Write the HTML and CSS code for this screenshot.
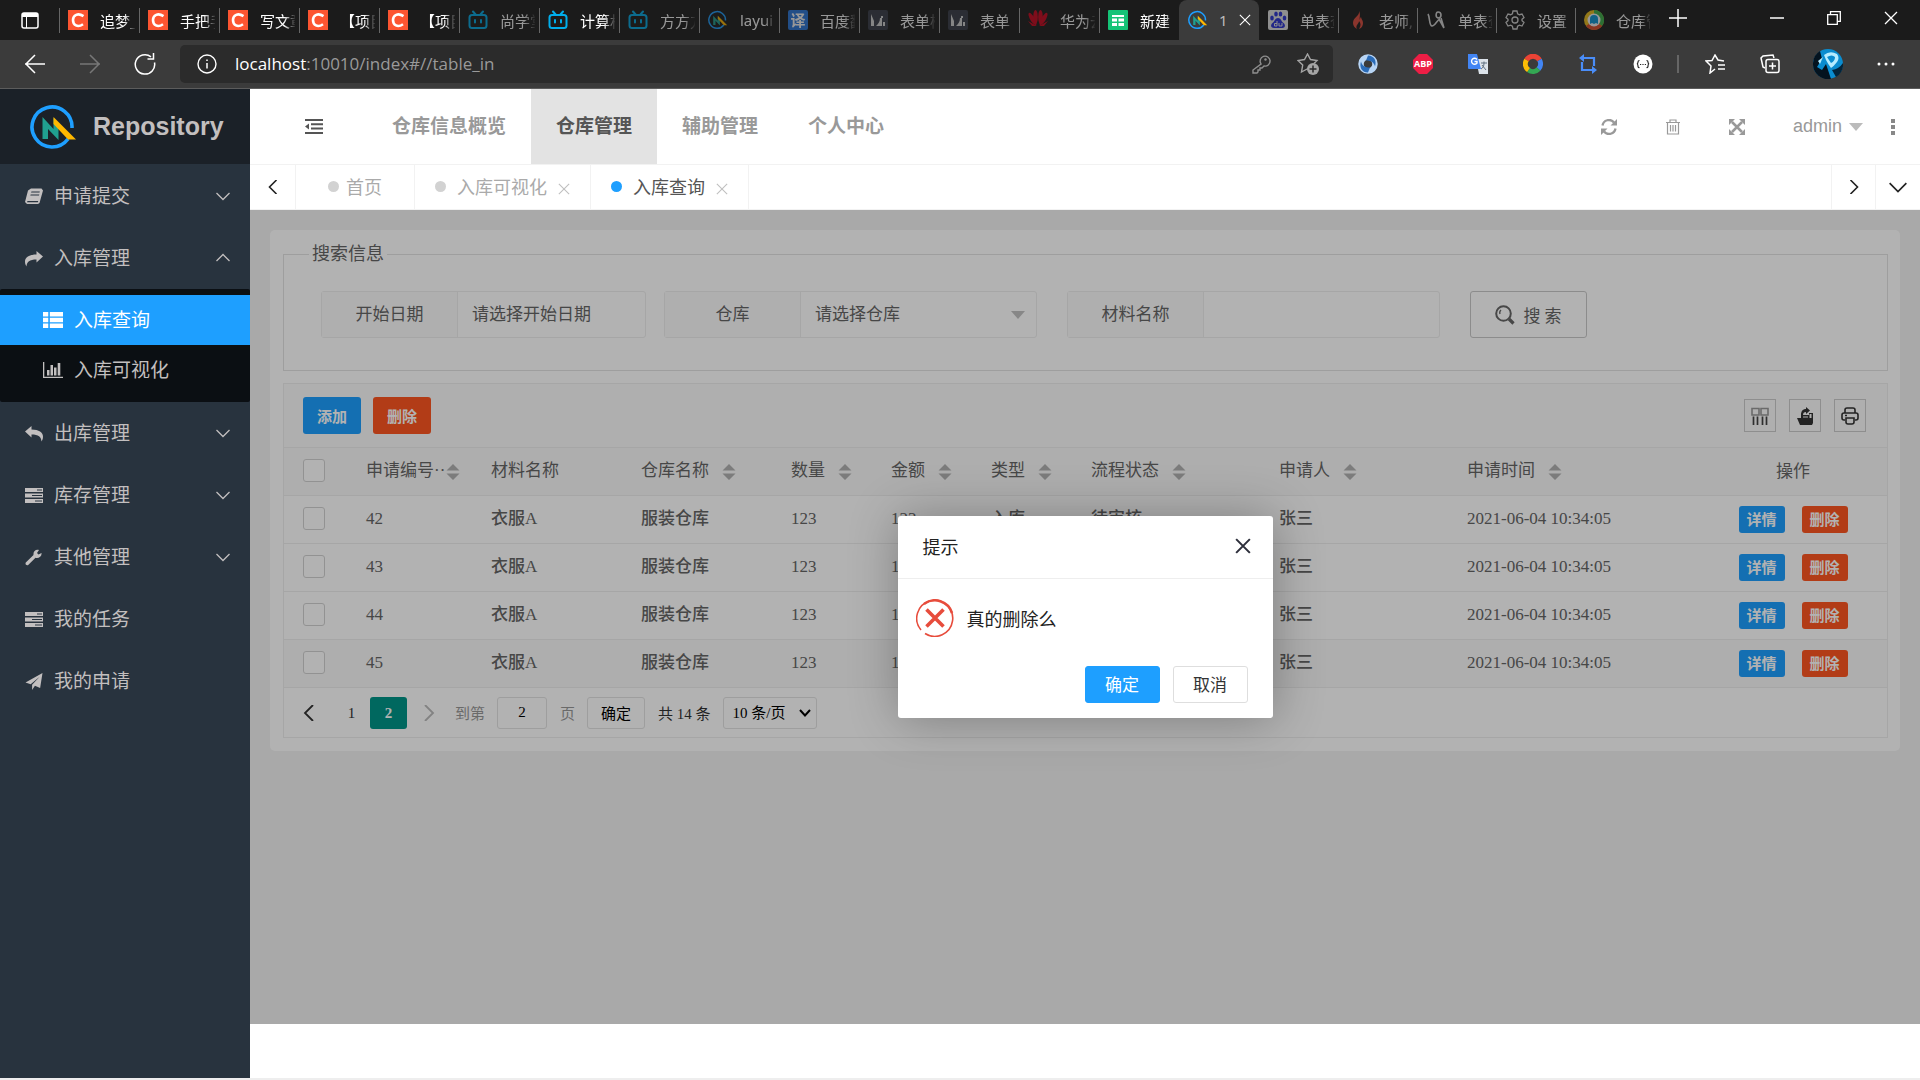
FILE: index.html
```html
<!DOCTYPE html>
<html lang="zh-CN">
<head>
    <meta charset="UTF-8">
    <meta name="viewport" content="width=device-width, initial-scale=1.0">
    <title>Repository</title>
    <link rel="stylesheet" href="styles.css">
</head>
<body>
    <!-- Shared icons -->
    <svg width="0" height="0" class="sprite" aria-hidden="true">
        <symbol id="i-c" viewBox="0 0 20 20"><path fill="#fc5531" d="M0 0h20v20H0z"/><path d="M15.500 6.200C10 2.500 5 5 5 10s4.500 8 10 4.200" fill="none" stroke="#fff" stroke-width="2.600"/></symbol>
        <symbol id="i-bili" viewBox="0 0 20 20"><g fill="none" stroke="#00aeec" stroke-width="2" stroke-linecap="round"><rect x="1.500" y="5" width="17" height="13" rx="2.500"/><path d="M5 1.500 8 5M15 1.500 12 5M7 10v2.500M13 10v2.500"/></g></symbol>
        <symbol id="i-logo" viewBox="0 0 48 46"><path d="M38 35A20 20 0 1 1 42 24" fill="none" stroke="#1e9fff" stroke-width="3.600"/><path fill="#20a090" d="m12.500 13 11 12V14l5 5v17L18 25v10h-5.500z"/><path fill="#ffb800" d="m23.500 13 22.500 22.500h-8L23.500 20z"/></symbol>
        <symbol id="i-ship" viewBox="0 0 20 20"><rect width="20" height="20" rx="2" fill="#393d49"/><path fill="#ddd" d="M3 16V4l3 7v5zM8 16c2-2 4-4 4-8h2v8zM15 12h2v4h-2zM13 6h2v2h-2z"/></symbol>
        <symbol id="i-down" viewBox="0 0 14 14"><path d="m.5 4 6.500 6.500L13.500 4" fill="none" stroke="currentColor" stroke-width="1.300"/></symbol>
        <symbol id="i-left" viewBox="0 0 14 14"><path d="M10.500 0 3.500 7l7 7" fill="none" stroke="currentColor" stroke-width="1.600"/></symbol>
        <symbol id="i-x" viewBox="0 0 14 14"><path d="m1 1 12 12M13 1 1 13" fill="none" stroke="currentColor" stroke-width="1.300"/></symbol>
        <symbol id="i-share" viewBox="0 0 18 16"><path fill="currentColor" d="M18 6 11.500.500V4C4 4 0 7 0 11c0 2 .5 3.500 1.500 5 .2-4.500 3-7 10-7v3z"/></symbol>
        <symbol id="i-server" viewBox="0 0 18 15"><path fill="currentColor" fill-rule="evenodd" d="M0 0h18v4H0zM0 5.500h18v4H0zM0 11h18v4H0zM12 1.500v1h5v-1zM7 7v1h10V7zM10 12.500v1h7v-1z"/></symbol>
        <symbol id="i-sort" viewBox="0 0 14 16"><path fill="#b2b2b2" d="m7 0 6.500 6.500H.5zM7 16 .5 9.500h13z"/></symbol>
        <symbol id="i-caret" viewBox="0 0 14 8"><path fill="currentColor" d="M0 0h14L7 8z"/></symbol>
    </svg>

    <!-- Browser tabs -->
    <div class="tabstrip">
        <div class="tab-actions">
            <svg width="20" height="20" viewBox="0 0 20 20"><rect x="2" y="3" width="16" height="15" rx="2" fill="none" stroke="#fff" stroke-width="1.500"/><path fill="#fff" d="M2 3h16v4H2z"/><path d="M6.500 7v11" stroke="#fff"/></svg>
        </div>
        <div class="tabs">
            <div class="tab"><svg><use href="#i-c"/></svg><span>追梦_</span></div>
            <div class="tab"><svg><use href="#i-c"/></svg><span>手把手</span></div>
            <div class="tab"><svg><use href="#i-c"/></svg><span>写文章</span></div>
            <div class="tab"><svg><use href="#i-c"/></svg><span>【项目</span></div>
            <div class="tab"><svg><use href="#i-c"/></svg><span>【项目</span></div>
            <div class="tab dim"><svg><use href="#i-bili"/></svg><span>尚学堂</span></div>
            <div class="tab"><svg><use href="#i-bili"/></svg><span>计算机</span></div>
            <div class="tab dim"><svg><use href="#i-bili"/></svg><span>方方方</span></div>
            <div class="tab dim"><svg><use href="#i-logo"/></svg><span>layui</span></div>
            <div class="tab dim"><b class="fanyi">译</b><span>百度翻</span></div>
            <div class="tab dim"><svg><use href="#i-ship"/></svg><span>表单模</span></div>
            <div class="tab dim"><svg><use href="#i-ship"/></svg><span>表单</span></div>
            <div class="tab dim"><svg viewBox="0 0 20 20"><g fill="#d0021b"><ellipse cx="7.500" cy="7" rx="2.300" ry="7"/><ellipse cx="12.500" cy="7" rx="2.300" ry="7"/><ellipse cx="4.500" cy="9" rx="2.300" ry="7" transform="rotate(-30 4.500 9)"/><ellipse cx="15.500" cy="9" rx="2.300" ry="7" transform="rotate(30 15.500 9)"/><path d="m0 11 9 5H4zM20 11l-9 5h5z"/></g></svg><span>华为云</span></div>
            <div class="tab"><svg viewBox="0 0 20 20"><rect width="20" height="20" rx="1" fill="#15c377"/><path d="M4 5h12v2H4zM4 8.500h5v3H4zM10.500 8.500H16v3h-5.500zM4 13h5v3H4zM10.500 13H16v3h-5.500z" fill="#fff"/></svg><span>新建</span></div>
            <div class="tab current"><svg><use href="#i-logo"/></svg><span>1</span><svg class="tab-close"><use href="#i-x"/></svg></div>
            <div class="tab dim first"><svg viewBox="0 0 20 20"><rect width="20" height="20" rx="2" fill="#eee"/><g fill="#2932e1"><ellipse cx="4" cy="8" rx="1.800" ry="2.500"/><ellipse cx="8" cy="4" rx="1.800" ry="2.500"/><ellipse cx="12.500" cy="4" rx="1.800" ry="2.500"/><ellipse cx="16.500" cy="8" rx="1.800" ry="2.500"/><path d="M10 8c3 0 3 3 5.500 5s1.500 5-1 5H6c-3 0-4-3-1.500-5S7 8 10 8z"/></g><path d="M9 11v5H6.500v-2.500H9M11 13v3h3v-3" fill="none" stroke="#eee"/></svg><span>单表查</span></div>
            <div class="tab dim"><svg viewBox="0 0 20 20"><path fill="#e74c3c" d="M12 1c1 5-6 6-6 12 0 3 2 5 4 6-2-4 2-5 2-8 2 2 2 5 0 8 3-1 4-4 4-6 0-3-2-4-2-6-1 1-1 2-1 3-1-3 1-5-1-9z"/></svg><span>老师,</span></div>
            <div class="tab dim"><svg viewBox="0 0 20 20"><path d="M2 4c2 3 1 12 4 12s5-6 8-7M12 2a3 3 0 1 1 0 6c-3-1-2-6 0-6zM13 9l5 9M15 8l3 10" fill="none" stroke="#ddd" stroke-width="1.600"/></svg><span>单表查</span></div>
            <div class="tab dim"><svg viewBox="0 0 20 20"><path d="M8 1h4l.6 2.700 1.800 1L17 4l2 3.500-2 1.800v1.400l2 1.800L17 16l-2.600-.8-1.800 1L12 19H8l-.6-2.800-1.800-1L3 16l-2-3.500 2-1.800V9.300L1 7.500 3 4l2.600.7 1.800-1z" fill="none" stroke="#ddd" stroke-width="1.300"/><circle cx="10" cy="10" r="3" fill="none" stroke="#ddd" stroke-width="1.300"/></svg><span>设置</span></div>
            <div class="tab dim"><svg viewBox="0 0 20 20"><circle cx="10" cy="10" r="10" fill="#f5c518"/><path d="M10 0a10 10 0 0 1 8 16L10 10z" fill="#3cb54a"/><path d="M18 16A10 10 0 0 1 2 16l8-6z" fill="#e34c26"/><circle cx="10" cy="10" r="6.500" fill="#fff"/><path d="M6 14V9a4 4 0 0 1 8 0v5l-2-1-2 1-2-1z" fill="#0a9bdc"/></svg><span>仓库管</span></div>
        </div>
        <div class="window-buttons">
            <svg class="plus" width="18" height="18" viewBox="0 0 18 18"><path d="M9 0v18M0 9h18" stroke="#fff" stroke-width="1.500"/></svg>
            <svg width="14" height="14" viewBox="0 0 14 14"><path d="M0 7h14" stroke="#fff" stroke-width="1.500"/></svg>
            <svg width="14" height="14" viewBox="0 0 14 14"><path d="M.7 3.700h9.600v9.600H.7zM3.500 3.500V.7h9.800v9.600h-2.800" fill="none" stroke="#fff" stroke-width="1.300"/></svg>
            <svg width="14" height="14"><use href="#i-x"/></svg>
        </div>
    </div>

    <!-- Browser toolbar -->
    <div class="toolbar">
        <div class="nav-icons">
            <svg width="22" height="22" viewBox="0 0 22 22"><path d="M21 11H1M11 2l-9 9 9 9" fill="none" stroke="#fff" stroke-width="1.500"/></svg>
            <svg width="22" height="22" viewBox="0 0 22 22"><path d="M1 11h20M11 2l9 9-9 9" fill="none" stroke="#777" stroke-width="1.500"/></svg>
            <svg width="22" height="22" viewBox="0 0 22 22"><path d="M20.500 9.500A9.700 9.700 0 1 1 17 3.800M19.500 0v6h-6" fill="none" stroke="#fff" stroke-width="1.500"/></svg>
        </div>
        <div class="address">
            <svg width="20" height="20" viewBox="0 0 20 20"><circle cx="10" cy="10" r="9" fill="none" stroke="#fff" stroke-width="1.400"/><path d="M10 9v5.500M10 5.500v1.600" stroke="#fff" stroke-width="1.500"/></svg>
            <span class="url"><b>localhost</b>:10010/index#//table_in</span>
            <svg width="20" height="20" viewBox="0 0 20 20"><path d="M10 10a5 5 0 1 1 3 2l-2 2H9v2H7v2l-1 1H2v-3z" fill="none" stroke="#8f8f8f" stroke-width="1.400"/><circle cx="14.500" cy="5.500" r="1.200" fill="#8f8f8f"/></svg>
            <svg width="22" height="22" viewBox="0 0 22 22"><path d="M11 15.500 4.500 19l1.200-7L1 7.500l6.500-1L10.500 1l3 5.500 6.500 1-3 3" fill="none" stroke="#a5a5a5" stroke-width="1.400"/><circle cx="16" cy="16" r="6" fill="#a5a5a5"/><path d="M16 12.500v7M12.500 16h7" stroke="#2b2b2b" stroke-width="1.500"/></svg>
        </div>
        <div class="extensions">
            <svg viewBox="0 0 20 20"><circle cx="10" cy="10" r="7" fill="none" stroke="#b8d5f5" stroke-width="5.500"/><path d="M10 1.500c6 0 9 5 7 11-1-4-4-6-9-6zM10 18.500c-6 0-9-5-7-11 1 4 4 6 9 6z" fill="#2b6cb8"/></svg>
            <span class="abp">ABP</span>
            <svg viewBox="0 0 20 20"><path fill="#dce3ea" d="M8 5h12v15H11z"/><path fill="#4285f4" d="M0 0h9l4 15H1a1 1 0 0 1-1-1z"/><path d="M9 5.500A3 3 0 1 0 9 9V7.500H6.500" fill="none" stroke="#fff" stroke-width="1.400"/><path d="M13 9h6M16 7.500V9c0 3-1 5-3 6M14 11l4 5" fill="none" stroke="#607080"/></svg>
            <svg viewBox="0 0 20 20" fill="none" stroke-width="5"><path d="M3.500 6a7.500 7.500 0 0 1 13 0" stroke="#ea4335"/><path d="M16.500 6a7.500 7.500 0 0 1-1 9" stroke="#4285f4"/><path d="M15.500 15a7.500 7.500 0 0 1-10 1" stroke="#34a853"/><path d="M5.500 16a7.500 7.500 0 0 1-2-10" stroke="#fbbc05"/></svg>
            <svg viewBox="0 0 20 20"><path d="M4 4h12v8M16 16H4V8" fill="none" stroke="#4a8df8" stroke-width="2.200"/><path fill="#4a8df8" d="M6 0v8L1 4zM14 12v8l5-4z"/></svg>
            <svg viewBox="0 0 20 20"><circle cx="10" cy="10" r="9.500" fill="#fff"/><path d="M6.500 6.500q-1.500 0-1.500 1.500T4 10q1 0 1 2t1.500 1.500M13.500 6.500q1.500 0 1.500 1.500t1 2q-1 0-1 2t-1.500 1.500M7 10.500h1.200M9.400 10.500h1.200M11.800 10.500H13" fill="none" stroke="#222" stroke-width="1.200"/></svg>
        </div>
        <div class="browser-menu">
            <svg width="20" height="20" viewBox="0 0 20 20"><path d="m10 15-5 4 1-7-5-5 6-.5L10 1l3 5 6 1M13 11h7M13 15h7" fill="none" stroke="#fff" stroke-width="1.500"/></svg>
            <svg width="20" height="20" viewBox="0 0 20 20"><path d="M5 14 3 13 1 4l2-2 10-1 1 3" fill="none" stroke="#fff" stroke-width="1.500"/><rect x="6" y="5.500" width="13" height="13" rx="2" fill="none" stroke="#fff" stroke-width="1.500"/><path d="M12.500 8.500v7M9 12h7" stroke="#fff" stroke-width="1.500"/></svg>
            <svg width="30" height="30" viewBox="0 0 30 30"><circle cx="15" cy="15" r="15" fill="#0a8ccf"/><path fill="#04131f" d="M0 15A15 15 0 0 1 7 2l2 8-5 8 5 3 4-6 3 9 2 6A15 15 0 0 1 0 15z"/><path fill="#b5ecff" d="M11 6q6-5 13-1 3 4 0 8-3 4-6 6-3-4-5-8zM5 12l5-4-3 7z"/><path fill="#0a8ccf" d="M14 8q5-3 8 0 0 4-4 6z"/><path fill="#03243a" d="M19 21q7-1 11-7a15 15 0 0 1-7 14z"/></svg>
            <svg width="20" height="20" viewBox="0 0 20 20" fill="#fff"><circle cx="3" cy="10" r="1.500"/><circle cx="10" cy="10" r="1.500"/><circle cx="17" cy="10" r="1.500"/></svg>
        </div>
    </div>

    <div class="app">
        <!-- Side menu -->
        <aside class="side">
            <div class="logo">
                <svg width="48" height="46"><use href="#i-logo"/></svg>
                <span>Repository</span>
            </div>
            <nav class="menu">
                <a href="#" class="menu-item"><svg viewBox="0 0 18 16"><path fill="currentColor" fill-rule="evenodd" d="M6 0h10.500L18 2l-3.500 12.500-1.500 1H2L0 13.500 3 2zM6.500 3 6 4h8.500l.3-1zM5.700 6l-.4 1H14l.3-1zM2.500 12.500l-.5 1.200h10.800l.5-1.200z"/></svg><span>申请提交</span><svg class="arrow"><use href="#i-down"/></svg></a>
                <a href="#" class="menu-item"><svg><use href="#i-share"/></svg><span>入库管理</span><svg class="arrow up"><use href="#i-down"/></svg></a>
                <div class="submenu">
                    <a href="#" class="active"><svg viewBox="0 0 19 15"><path fill="currentColor" d="M0 0h5v4.200H0zM6.500 0H19v4.200H6.500zM0 5.400h5v4.200H0zM6.500 5.400H19v4.200H6.500zM0 10.800h5V15H0zM6.500 10.800H19V15H6.500z"/></svg><span>入库查询</span></a>
                    <a href="#"><svg viewBox="0 0 20 16"><path fill="currentColor" d="M0 0h1.300v14.700H20V16H0zM4 8h2.500v5.500H4zM7.500 3H10v10.500H7.500zM11 5.500h2.500v8H11zM14.700 1h2.600v12.500h-2.600z"/></svg><span>入库可视化</span></a>
                </div>
                <a href="#" class="menu-item"><svg class="mirror"><use href="#i-share"/></svg><span>出库管理</span><svg class="arrow"><use href="#i-down"/></svg></a>
                <a href="#" class="menu-item"><svg><use href="#i-server"/></svg><span>库存管理</span><svg class="arrow"><use href="#i-down"/></svg></a>
                <a href="#" class="menu-item"><svg viewBox="0 0 18 16"><path fill="currentColor" d="M16.500 3.500 13.500 5 12 3.500l2-3C11-.5 8 1.500 8.500 5.500L.8 13c-1 1.500.7 3.500 2.400 2.400l7.300-7.200c3 .8 6.500-1 6-4.700z"/></svg><span>其他管理</span><svg class="arrow"><use href="#i-down"/></svg></a>
                <a href="#" class="menu-item"><svg><use href="#i-server"/></svg><span>我的任务</span></a>
                <a href="#" class="menu-item"><svg viewBox="0 0 18 18"><path fill="currentColor" d="M18 0 15.500 16l-5.500-2.500L7 18v-5.500L15 4l-9.500 8L0 10z"/></svg><span>我的申请</span></a>
            </nav>
        </aside>

        <main class="main">
            <header class="header">
                <a href="#" class="fold" aria-label="menu"><svg width="18" height="15" viewBox="0 0 18 15"><path fill="#555" d="M0 0h18v2H0zM6 4.300h12v2H6zM6 8.600h12v2H6zM0 13h18v2H0zM4 4.500v6L0 7.500z"/></svg></a>
                <nav class="top-nav">
                    <a href="#">仓库信息概览</a>
                    <a href="#" class="active">仓库管理</a>
                    <a href="#">辅助管理</a>
                    <a href="#">个人中心</a>
                </nav>
                <div class="header-tools">
                    <svg width="16" height="16" viewBox="0 0 16 16"><path d="M1.500 6.500a6.500 6.500 0 0 1 11.500-3M14.500 9.500a6.500 6.500 0 0 1-11.500 3" fill="none" stroke="#999" stroke-width="2.300"/><path fill="#999" d="M16 0v6.500H9.500zM0 16V9.500h6.500z"/></svg>
                    <svg width="16" height="16" viewBox="0 0 16 16"><path d="M1 3.500h14M5 3V1h6v2M2.500 4v11h11V4M5.500 6v6.500M8 6v6.500M10.500 6v6.500" fill="none" stroke="#999" stroke-width="1.200"/></svg>
                    <svg width="16" height="16" viewBox="0 0 16 16"><path d="m3 3 10 10M13 3 3 13" stroke="#999" stroke-width="2.500"/><path fill="#999" d="M0 0h6L0 6zM16 0v6l-6-6zM0 16v-6l6 6zM16 16h-6l6-6z"/></svg>
                    <a href="#" class="user">admin <svg width="14" height="8"><use href="#i-caret"/></svg></a>
                    <svg class="more" width="4" height="16" viewBox="0 0 4 16" fill="#888"><path d="M0 0h4v4H0zM0 6h4v4H0zM0 12h4v4H0z"/></svg>
                </div>
            </header>

            <div class="page-tabs">
                <button class="step" aria-label="prev"><svg width="14" height="14"><use href="#i-left"/></svg></button>
                <a href="#" class="page-tab home"><i class="dot"></i>首页</a>
                <a href="#" class="page-tab"><i class="dot"></i><span>入库可视化</span><svg><use href="#i-x"/></svg></a>
                <a href="#" class="page-tab active"><i class="dot"></i><span>入库查询</span><svg><use href="#i-x"/></svg></a>
                <button class="step next" aria-label="next"><svg class="mirror" width="14" height="14"><use href="#i-left"/></svg></button>
                <button class="step last" aria-label="tabs"><svg width="18" height="18"><use href="#i-down"/></svg></button>
            </div>

            <section class="frame">
                <div class="card">
                    <fieldset class="search">
                        <legend>搜索信息</legend>
                        <form class="search-row">
                            <div class="group date"><label for="start">开始日期</label><input type="text" id="start" placeholder="请选择开始日期"></div>
                            <div class="group"><label for="store">仓库</label><div class="picker"><select id="store"><option>请选择仓库</option></select><svg width="14" height="8"><use href="#i-caret"/></svg></div></div>
                            <div class="group name"><label for="material">材料名称</label><input type="text" id="material"></div>
                            <button type="button" class="search-btn"><svg width="20" height="20" viewBox="0 0 20 20"><circle cx="8.500" cy="8.500" r="7.300" fill="none" stroke="#666" stroke-width="2"/><path d="M5 9a3.500 3.500 0 0 1 1-4" fill="none" stroke="#666" stroke-width="1.300"/><path d="m14 14 4.500 4.500" stroke="#666" stroke-width="3.200"/></svg>搜 索</button>
                        </form>
                    </fieldset>

                    <div class="table-box">
                        <div class="table-tools">
                            <button class="btn blue">添加</button>
                            <button class="btn red">删除</button>
                            <button class="tool first" aria-label="columns"><svg viewBox="0 0 18 18"><path d="M1 1.500h7V8H1zM10 1.500h7V8h-7z" fill="none" stroke="#999" stroke-width="1.600"/><path d="M2.500 9.500V18M6.500 9.500V18M11.500 9.500V18M15.500 9.500V18" stroke="#444" stroke-width="1.700"/></svg></button>
                            <button class="tool" aria-label="export"><svg viewBox="0 0 18 18"><path fill="#333" d="M1 11h4V8h8V6h4v10l-1 2H4zM5 8c0-4 2-6 5-6V0l4 3.500L10 7V5C8 5 7 6 7 8z"/><path fill="#fbfbfb" d="M13.500 7h2v4h-2zM7 9.500h5v1H7z"/></svg></button>
                            <button class="tool" aria-label="print"><svg viewBox="0 0 18 18"><path d="M4 6V3q0-2 2-2h6q2 0 2 2v3M4 13H3q-2 0-2-2V8q0-2 2-2h12q2 0 2 2v3q0 2-2 2h-1M5 11h8v4q0 2-2 2H7q-2 0-2-2zM4 8.500h2" fill="none" stroke="#333" stroke-width="1.600"/></svg></button>
                        </div>
                        <table>
                            <colgroup>
                                <col class="c-check"><col class="c-id"><col class="c-name"><col class="c-name"><col class="c-num"><col class="c-num"><col class="c-num"><col class="c-state"><col class="c-state"><col><col class="c-state">
                            </colgroup>
                            <thead>
                                <tr>
                                    <th><input type="checkbox" aria-label="all"></th>
                                    <th class="tight">申请编号··<svg><use href="#i-sort"/></svg></th>
                                    <th>材料名称</th>
                                    <th>仓库名称<svg><use href="#i-sort"/></svg></th>
                                    <th>数量<svg><use href="#i-sort"/></svg></th>
                                    <th>金额<svg><use href="#i-sort"/></svg></th>
                                    <th>类型<svg><use href="#i-sort"/></svg></th>
                                    <th>流程状态<svg><use href="#i-sort"/></svg></th>
                                    <th>申请人<svg><use href="#i-sort"/></svg></th>
                                    <th>申请时间<svg><use href="#i-sort"/></svg></th>
                                    <th class="center">操作</th>
                                </tr>
                            </thead>
                            <tbody>
                                <tr><td><input type="checkbox" aria-label="42"></td><td>42</td><td>衣服A</td><td>服装仓库</td><td>123</td><td>123</td><td>入库</td><td>待审核</td><td>张三</td><td>2021-06-04 10:34:05</td><td class="center"><div class="ops"><button class="btn small blue">详情</button><button class="btn small red">删除</button></div></td></tr>
                                <tr><td><input type="checkbox" aria-label="43"></td><td>43</td><td>衣服A</td><td>服装仓库</td><td>123</td><td>123</td><td>入库</td><td>待审核</td><td>张三</td><td>2021-06-04 10:34:05</td><td class="center"><div class="ops"><button class="btn small blue">详情</button><button class="btn small red">删除</button></div></td></tr>
                                <tr><td><input type="checkbox" aria-label="44"></td><td>44</td><td>衣服A</td><td>服装仓库</td><td>123</td><td>123</td><td>入库</td><td>待审核</td><td>张三</td><td>2021-06-04 10:34:05</td><td class="center"><div class="ops"><button class="btn small blue">详情</button><button class="btn small red">删除</button></div></td></tr>
                                <tr class="hover"><td><input type="checkbox" aria-label="45"></td><td>45</td><td>衣服A</td><td>服装仓库</td><td>123</td><td>123</td><td>入库</td><td>待审核</td><td>张三</td><td>2021-06-04 10:34:05</td><td class="center"><div class="ops"><button class="btn small blue">详情</button><button class="btn small red">删除</button></div></td></tr>
                            </tbody>
                        </table>
                        <div class="pager">
                            <a href="#" class="page-prev" aria-label="prev"><svg width="16" height="16"><use href="#i-left"/></svg></a>
                            <a href="#" class="page">1</a>
                            <a href="#" class="page on">2</a>
                            <a href="#" class="page-next" aria-label="next"><svg class="mirror" width="16" height="16"><use href="#i-left"/></svg></a>
                            <label for="goto">到第</label>
                            <input type="text" id="goto" value="2">
                            <span class="grey">页</span>
                            <button>确定</button>
                            <span>共 14 条</span>
                            <div class="picker limit"><select aria-label="limit"><option>10 条/页</option></select><svg width="12" height="12" viewBox="0 0 12 12"><path d="m1 3 5 5.500L11 3" fill="none" stroke="#000" stroke-width="2"/></svg></div>
                        </div>
                    </div>
                </div>

                <!-- Confirm dialog -->
                <div class="shade">
                    <div class="dialog" role="dialog">
                        <div class="dialog-title">提示<button class="close" aria-label="close"><svg width="16" height="16" viewBox="0 0 14 14"><path d="m1 1 12 12M13 1 1 13" stroke="#2d2f3b" stroke-width="1.800"/></svg></button></div>
                        <div class="dialog-body">
                            <svg width="38" height="38" viewBox="0 0 38 38" fill="none" stroke="#e74c3c"><path d="M9 34.500A18 18 0 1 0 5 31" stroke-width="1.600"/><path d="M8 5a18 18 0 0 1 28 9" stroke-width="2.600"/><path d="m10.500 10.500 17 17M27.500 10.500l-17 17" stroke-width="3.600"/></svg>
                            真的删除么
                        </div>
                        <div class="dialog-btns">
                            <button class="ok">确定</button>
                            <button>取消</button>
                        </div>
                    </div>
                </div>
            </section>
            <footer class="footer"></footer>
        </main>
    </div>
    <div class="scrollbar"></div>
</body>
</html>
```
FILE: styles.css
```css
* {
    box-sizing: border-box;
}
body {
    margin: 0;
    min-height: 100vh;
    display: flex;
    flex-direction: column;
    font-family: "Liberation Sans", "Noto Sans CJK SC", sans-serif;
    font-size: 18px;
    background-color: #fff;
}
a {
    color: inherit;
    text-decoration: none;
}
button, input, select {
    font: inherit;
    color: inherit;
    margin: 0;
}
button {
    padding: 0;
    cursor: pointer;
}
svg {
    flex: none;
    display: block;
}
.sprite {
    position: absolute;
}
.mirror {
    transform: scaleX(-1);
}

/* Browser */
.tabstrip {
    display: flex;
    height: 40px;
    background-color: #1b1b1b;
    color: #fff;
    font: 15px "Noto Sans", "Noto Sans CJK SC", sans-serif;
}
.tab-actions {
    width: 59px;
    padding: 10px 20px;
}
.tabs {
    flex: 1;
    min-width: 0;
    display: flex;
}
.tab {
    flex: 0 1 80px;
    min-width: 0;
    display: flex;
    align-items: center;
    gap: 12px;
    padding-left: 9px;
    background: linear-gradient(#666, #666) 0 8px / 1px 25px no-repeat;
}
.tab.first, .tab.first ~ .tab {
    flex-basis: 79px;
}
.tab svg, .fanyi {
    width: 20px;
    height: 20px;
}
.tab span {
    overflow: hidden;
    white-space: nowrap;
}
.tab:not(.current) span {
    flex: 1;
    margin-right: 4px;
    -webkit-mask-image: linear-gradient(90deg, #000 24px, transparent 36px);
    mask-image: linear-gradient(90deg, #000 24px, transparent 36px);
}
.tab.dim > * {
    opacity: 0.55;
}
.tab.current {
    gap: 11px;
    background: #3b3b3b;
    border-radius: 8px 8px 0 0;
}
.tab.first {
    background: none;
}
.tab.current span {
    color: #bbb;
}
.tab.current .tab-close {
    width: 12px;
    height: 12px;
}
.fanyi {
    border-radius: 2px;
    background-color: #2878e0;
    line-height: 20px;
    text-align: center;
}
.window-buttons {
    width: 266px;
    display: flex;
    align-items: center;
    gap: 43px;
    padding: 0 22px 4px 15px;
}
.window-buttons .plus {
    margin-right: auto;
}
.toolbar {
    display: flex;
    align-items: center;
    height: 49px;
    background-color: #3b3b3b;
    border-bottom: 1px solid #5c5c5c;
}
.nav-icons {
    width: 180px;
    display: flex;
    gap: 33px;
    padding-left: 24px;
}
.address {
    flex: 1;
    height: 38px;
    display: flex;
    align-items: center;
    padding: 0 14px 0 17px;
    border-radius: 5px;
    background-color: #2b2b2b;
    color: #9a9a9a;
    font-family: "Open Sans", sans-serif;
    font-size: 17px;
}
.address .url {
    flex: 1;
    padding: 0 0 2px 18px;
}
.address b {
    font-weight: normal;
    color: #fff;
}
.address svg + svg {
    margin-left: 26px;
}
.extensions {
    display: flex;
    gap: 35px;
    padding: 0 24px 0 25px;
}
.extensions svg, .abp {
    width: 20px;
    height: 20px;
}
.abp {
    background-color: #ed1e45;
    clip-path: polygon(30% 0, 70% 0, 100% 30%, 100% 70%, 70% 100%, 30% 100%, 0 70%, 0 30%);
    color: #fff;
    font: bold 9px/20px "Open Sans", sans-serif;
    text-align: center;
}
.browser-menu {
    display: flex;
    align-items: center;
    gap: 33px;
    padding: 0 24px 0 28px;
    background: linear-gradient(#666, #666) 0 50% / 2px 18px no-repeat;
}
.browser-menu svg:first-child {
    margin-right: 2px;
}

/* Side menu */
.app {
    flex: 1;
    display: flex;
}
.side {
    width: 250px;
    background-color: #28333e;
    color: #c2bfbf;
}
.logo {
    height: 75px;
    display: flex;
    align-items: center;
    gap: 15px;
    padding-left: 30px;
    background-color: #1b2128;
    font-size: 25px;
    font-weight: bold;
}
.menu {
    padding-top: 1px;
    font-size: 19px;
}
.menu-item {
    height: 62px;
    display: flex;
    align-items: center;
    gap: 11px;
    padding: 0 20px 0 25px;
}
.menu span {
    padding-bottom: 4px;
}
.menu-item svg {
    width: 18px;
    height: 17px;
}
.menu-item .arrow {
    width: 14px;
    height: 14px;
    margin-left: auto;
}
.arrow.up {
    transform: scaleY(-1);
}
.submenu {
    padding: 6px 0 7px;
    border-radius: 2px;
    background-color: #0b0f13;
}
.submenu a {
    height: 50px;
    display: flex;
    align-items: center;
    gap: 11px;
    padding-left: 43px;
}
.submenu svg {
    width: 20px;
    height: 16px;
}
.submenu .active {
    background-color: #1e9fff;
    color: #fff;
}

/* Header */
.main {
    flex: 1;
    min-width: 0;
    display: flex;
    flex-direction: column;
}
.header {
    height: 75px;
    display: flex;
    align-items: center;
}
.fold {
    padding: 0 44px 0 55px;
}
.top-nav {
    display: flex;
    color: #999;
    font-size: 19px;
    font-weight: bold;
    line-height: 75px;
}
.top-nav a {
    padding: 0 25px;
}
.top-nav .active {
    background-color: #e3e3e3;
    color: #555;
}
.header-tools {
    margin-left: auto;
    display: flex;
    align-items: center;
    gap: 48px;
    padding-right: 25px;
    color: #999;
}
.user {
    display: flex;
    align-items: center;
    gap: 7px;
}
.user svg {
    color: #bbb;
}
.header-tools .more {
    margin-left: -20px;
}
.page-tabs {
    height: 46px;
    display: flex;
    border-top: 1px solid #f2f2f2;
    border-bottom: 1px solid #f2f2f2;
    color: #aaa;
}
.step {
    width: 46px;
    display: flex;
    align-items: center;
    justify-content: center;
    border: 0;
    border-right: 1px solid #f2f2f2;
    background: none;
    color: #222;
}
.step.next {
    width: 45px;
    margin-left: auto;
    border-left: 1px solid #f2f2f2;
}
.step.last {
    width: 44px;
    border: 0;
}
.page-tab {
    display: flex;
    align-items: center;
    padding: 0 20px 3px 20px;
    border-right: 1px solid #f2f2f2;
}
.page-tab.home {
    padding: 0 32px 3px;
}
.page-tab span {
    padding: 0 11px 0 4px;
}
.page-tab svg {
    width: 12px;
    height: 12px;
    margin-top: 6px;
    color: #c0c0c0;
}
.page-tab.active {
    color: #555;
}
.dot {
    width: 11px;
    height: 11px;
    margin: 2px 7px 0 0;
    border-radius: 50%;
    background-color: #d2d2d2;
}
.active .dot {
    background-color: #1e9fff;
}

/* Content */
.frame {
    position: relative;
    flex: 1;
    padding: 20px;
    background-color: #f2f2f2;
    color: #666;
    font-family: "Liberation Serif", "Noto Sans CJK SC", serif;
    font-size: 17px;
}
.card {
    padding: 12px 12px 13px 13px;
    border-radius: 5px;
    background-color: #fff;
}
.search {
    min-width: 0;
    margin: 0 0 12px;
    padding: 25px 37px 32px;
    border: 1px solid #e2e2e2;
}
.search legend {
    margin-left: -12px;
    padding: 0 3px;
    font-size: 18px;
    line-height: 24px;
}
.search-row {
    display: flex;
    height: 47px;
}
.group {
    width: 373px;
    display: flex;
    margin-right: 30px;
    border: 1px solid #eee;
    border-radius: 3px;
}
.group.date {
    width: 325px;
    margin-right: 18px;
}
.group label {
    width: 136px;
    border-right: 1px solid #eee;
    background-color: #fbfbfb;
    line-height: 45px;
    text-align: center;
}
.group input, .group select {
    width: 100%;
    height: 100%;
    padding: 0 14px;
    border: 0;
    background: none;
}
.group > input {
    flex: 1;
    min-width: 0;
}
input::placeholder {
    color: #666;
    opacity: 1;
}
.picker {
    position: relative;
    flex: 1;
}
.picker select {
    appearance: none;
    -webkit-appearance: none;
}
.picker svg {
    position: absolute;
    top: 50%;
    right: 11px;
    margin-top: -4px;
    color: #c2c2c2;
    pointer-events: none;
}
.search-btn {
    width: 117px;
    display: flex;
    align-items: center;
    justify-content: center;
    gap: 8px;
    border: 1px solid #c9c9c9;
    border-radius: 3px;
    background-color: #fff;
}
.table-box {
    border: 1px solid #eee;
}
.table-tools {
    height: 64px;
    display: flex;
    align-items: center;
    padding: 0 21px 0 19px;
    border-bottom: 1px solid #eee;
    background-color: #fbfbfb;
}
.btn {
    width: 58px;
    height: 37px;
    margin-right: 12px;
    border: 0;
    border-radius: 3px;
    color: #fff;
    font-size: 15px;
    font-weight: bold;
}
.blue {
    background-color: #1e9fff;
}
.red {
    background-color: #ff5722;
}
.tool {
    width: 32px;
    height: 33px;
    margin-left: 13px;
    display: flex;
    align-items: center;
    justify-content: center;
    border: 1px solid #ccc;
    background: none;
}
.tool.first {
    margin-left: auto;
}
.tool svg {
    width: 18px;
    height: 18px;
}
table {
    width: 100%;
    table-layout: fixed;
    border-collapse: separate;
    border-spacing: 0;
}
th, td {
    height: 48px;
    padding: 0 0 2px 19px;
    border-bottom: 1px solid #eee;
    font-weight: normal;
    line-height: 24px;
    text-align: left;
    white-space: nowrap;
}
td {
    font-weight: 500;
}
thead, .hover {
    background-color: #fafafa;
}
th svg {
    display: inline-block;
    width: 14px;
    height: 16px;
    margin-left: 13px;
    vertical-align: -4px;
}
th.tight svg {
    margin-left: 1px;
}
.center {
    padding: 0;
    text-align: center;
}
.c-check {
    width: 63px;
}
.c-id {
    width: 125px;
}
.c-name {
    width: 150px;
}
.c-num {
    width: 100px;
}
.c-state {
    width: 188px;
}
input[type="checkbox"] {
    appearance: none;
    -webkit-appearance: none;
    display: block;
    width: 22px;
    height: 23px;
    border: 1px solid #d2d2d2;
    border-radius: 3px;
    background-color: #fff;
}
.ops {
    display: flex;
    justify-content: center;
    gap: 17px;
}
.btn.small {
    width: 46px;
    height: 27px;
    margin: 0;
    font-size: 15px;
}
.pager {
    height: 49px;
    display: flex;
    align-items: center;
    padding-left: 17px;
    color: #333;
    font-size: 15px;
}
.pager .page, .page-prev, .page-next {
    width: 37px;
    height: 32px;
    line-height: 32px;
    text-align: center;
}
.pager .page.on {
    border-radius: 3px;
    background-color: #009688;
    color: #fff;
    font-weight: bold;
}
.pager .page-prev, .pager .page-next {
    display: flex;
    align-items: center;
}
.pager .page-prev {
    width: 32px;
}
.pager .page-next {
    width: 48px;
    padding-left: 14px;
    color: #bbb;
}
.pager label, .grey {
    color: #999;
}
.pager input, .pager button, .pager select {
    height: 32px;
    border: 1px solid #e2e2e2;
    border-radius: 3px;
    background-color: #fff;
    text-align: center;
    color: #000;
}
.pager input {
    width: 50px;
    margin: 0 13px 0 12px;
}
.pager button {
    width: 58px;
    margin: 0 13px 0 12px;
}
.picker.limit {
    flex: none;
    width: 94px;
    margin-left: 12px;
}
.pager .limit select {
    width: 94px;
    padding: 0 9px;
    text-align: left;
}
.limit svg {
    right: 6px;
    margin-top: -6px;
}

/* Dialog */
.shade {
    position: absolute;
    inset: 0;
    display: flex;
    align-items: center;
    justify-content: center;
    background-color: rgba(0, 0, 0, 0.3);
}
.dialog {
    width: 375px;
    border-radius: 3px;
    background-color: #fff;
    box-shadow: 1px 1px 50px rgba(0, 0, 0, 0.3);
    color: #222;
    font-size: 18px;
}
.dialog-title {
    height: 63px;
    display: flex;
    align-items: center;
    justify-content: space-between;
    padding: 0 22px 2px 25px;
    border-bottom: 1px solid #eee;
}
.close {
    border: 0;
    background: none;
}
.dialog-body {
    display: flex;
    align-items: center;
    gap: 13px;
    padding: 20px 18px 16px;
}
.dialog-btns {
    display: flex;
    justify-content: flex-end;
    gap: 13px;
    padding: 13px 25px 15px;
}
.dialog-btns button {
    width: 75px;
    height: 37px;
    padding-bottom: 2px;
    border: 1px solid #dedede;
    border-radius: 3px;
    background-color: #fff;
    color: #333;
    font-size: 17px;
}
.dialog-btns .ok {
    border-color: #1e9fff;
    background-color: #1e9fff;
    color: #fff;
}
.footer {
    height: 54px;
}
.scrollbar {
    height: 2px;
    background-color: #eee;
}
```
